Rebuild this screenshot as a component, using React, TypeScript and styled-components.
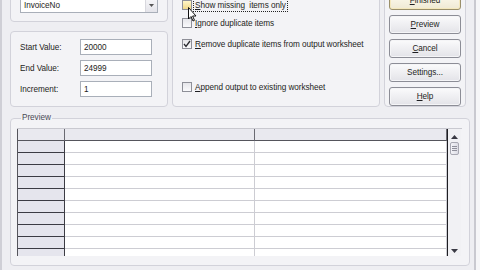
import React from 'react';
import styled, {createGlobalStyle} from 'styled-components';

const GlobalStyle = createGlobalStyle`
  html, body {
    margin: 0;
    padding: 0;
    overflow: hidden;
    background: #ececf0;
  }
  body {
    font-family: "Liberation Sans", Arial, sans-serif;
    font-size: 8.2px;
    letter-spacing: -0.05px;
    color: #1e1e22;
  }
`;

const Window = styled.div`
  width: 480px;
  height: 270px;
  box-sizing: border-box;
  overflow: hidden;
  background: #eeeef2;
  border-left: 2px solid #cfcfd6;
  border-right: 4px solid #f6f6f8;
  padding: 0 6px 0 8px;
  box-shadow: inset -2px 0 0 #c9c9d0;
`;

const TopRow = styled.div`
  display: flex;
  gap: 4px;
  margin-top: -20px;
  height: 127px;
`;

const LeftColumn = styled.div`
  width: 158px;
  display: flex;
  flex-direction: column;
  gap: 9px;
`;

const Group = styled.div<{ $h?: number; $w?: number }>`
  box-sizing: border-box;
  border: 1px solid #d2d2da;
  border-radius: 4px;
  background: #f3f3f6;
  ${p => (p.$h ? `height: ${p.$h}px;` : 'flex: 1;')}
  ${p => (p.$w ? `width: ${p.$w}px; flex: none;` : '')}
`;

const ComboGroup = styled(Group)`
  padding: 16px 0 0 9px;
`;

const Combo = styled.div`
  width: 138px;
  height: 16px;
  box-sizing: border-box;
  border: 1px solid #a9afb9;
  background: #fff;
  display: flex;
  align-items: center;
  padding-left: 3px;
`;

const ComboText = styled.span`
  flex: 1;
`;

const ComboButton = styled.span`
  width: 12px;
  height: 14px;
  box-sizing: border-box;
  border-left: 1px solid #d8d8de;
  background: linear-gradient(#f7f7f9, #e4e4ea);
  display: flex;
  align-items: center;
  justify-content: center;
`;

const RangeGroup = styled(Group)`
  padding: 7px 0 0 9px;
  display: grid;
  grid-template-columns: 60px 72px;
  grid-auto-rows: 16px;
  row-gap: 5px;
  align-items: center;
`;

const FieldLabel = styled.span`
  white-space: nowrap;
`;

const TextBox = styled.div`
  height: 16px;
  box-sizing: border-box;
  border: 1px solid #a9afb9;
  background: #fff;
  padding: 0 3px;
  display: flex;
  align-items: center;
`;

const OptionsGroup = styled(Group)`
  position: relative;
  padding: 18px 0 0 9px;
  display: flex;
  flex-direction: column;
`;

const CheckRow = styled.label<{ $top: number }>`
  display: flex;
  align-items: center;
  gap: 2px;
  height: 12px;
  margin-top: ${p => p.$top}px;
  white-space: nowrap;
`;

const Box = styled.span<{ $hover?: boolean }>`
  width: 10px;
  height: 10px;
  box-sizing: border-box;
  border: 1px solid #8e8f98;
  background: ${p => (p.$hover ? 'linear-gradient(#fff6c8, #f1d98a)' : 'linear-gradient(#e6e6ea, #fafafc)')};
  display: flex;
  align-items: center;
  justify-content: center;
`;

const CheckText = styled.span<{ $focus?: boolean }>`
  padding: 0 1px;
  outline: ${p => (p.$focus ? '1px dotted #222' : 'none')};
  line-height: 11px;
`;

const Mnemonic = styled.span`
  text-decoration: underline;
`;

const Cursor = styled.svg`
  position: absolute;
  left: 15px;
  top: 26px;
`;

const ButtonGroup = styled(Group)`
  padding: 10px 0 0 4px;
  display: flex;
  flex-direction: column;
  gap: 5px;
`;

const Button = styled.div<{ $default?: boolean }>`
  width: 72px;
  height: 19px;
  box-sizing: border-box;
  border: 1px solid ${p => (p.$default ? '#9a8f6a' : '#8c8d96')};
  border-radius: 3px;
  background: ${p => (p.$default ? 'linear-gradient(#fffdf2, #efe9d4)' : 'linear-gradient(#fbfbfc, #e3e3e8)')};
  box-shadow: inset 0 0 0 1px ${p => (p.$default ? '#f4e8bd' : '#f5f5f7')};
  display: flex;
  align-items: ${p => (p.$default ? 'flex-end' : 'center')};
  padding-bottom: ${p => (p.$default ? '4px' : '0')};
  justify-content: center;
`;

const PreviewGroup = styled.fieldset`
  margin: 6px 0 0 0;
  padding: 5px 7px 0 6px;
  height: 153px;
  box-sizing: border-box;
  border: 1px solid #d2d2da;
  border-radius: 4px;
  background: #f3f3f6;
`;

const Legend = styled.legend`
  padding: 0 1px;
  margin-left: 4px;
  color: #4a4a55;
  line-height: 10px;
`;

const GridWrap = styled.div`
  display: flex;
  height: 127px;
  border-top: 1px solid #c9c9d0;
`;

const Table = styled.div`
  width: 429px;
  overflow: hidden;
  border-left: 1px solid #55555c;
`;

const Row = styled.div`
  display: grid;
  grid-template-columns: 47px 190px 1fr;
  height: 12px;
`;

const HeadCell = styled.div`
  box-sizing: border-box;
  background: #e9e9ef;
  border-bottom: 1px solid #55555c;
  border-right: 1px solid #6a6a72;
`;

const RowHead = styled.div`
  box-sizing: border-box;
  background: #e5e5ed;
  border-bottom: 1px solid #3c3c44;
  border-right: 1px solid #3c3c44;
`;

const Cell = styled.div`
  box-sizing: border-box;
  background: #fff;
  border-bottom: 1px solid #cdcdd3;
  border-right: 1px solid #cdcdd3;
`;

const ScrollBar = styled.div`
  width: 14px;
  border-left: 1px solid #1e1e22;
  background: #f1f1f4;
  display: flex;
  flex-direction: column;
  align-items: center;
  padding: 6px 0 3px;
  box-sizing: border-box;
`;

const Thumb = styled.div`
  width: 9px;
  height: 13px;
  margin-top: 3px;
  box-sizing: border-box;
  border: 1px solid #a8a8b2;
  border-radius: 2px;
  background: linear-gradient(90deg, #f4f4f8, #dcdce4);
  display: flex;
  flex-direction: column;
  align-items: center;
  justify-content: center;
  gap: 1px;
`;

const Grip = styled.span`
  width: 5px;
  height: 1px;
  background: #8f8f9a;
`;

const Spacer = styled.div`
  flex: 1;
`;

const Arrow: React.FC<{ down?: boolean }> = ({down}) => (
  <svg width="7" height="4" viewBox="0 0 7 4">
    <path d={down ? 'M0 0H7L3.5 4Z' : 'M0 4H7L3.5 0Z'} fill="#3a3a44"/>
  </svg>
);

const rows = Array.from({length: 10}, (_, i) => i);

const App: React.FC = () => {
  return (
    <Window>
      <GlobalStyle/>
      <TopRow>
        <LeftColumn>
          <ComboGroup $h={42}>
            <Combo>
              <ComboText>InvoiceNo</ComboText>
              <ComboButton>
                <svg width="5" height="3" viewBox="0 0 5 3">
                  <path d="M0 0H5L2.5 3Z" fill="#555"/>
                </svg>
              </ComboButton>
            </Combo>
          </ComboGroup>
          <RangeGroup>
            <FieldLabel>Start Value:</FieldLabel>
            <TextBox>20000</TextBox>
            <FieldLabel>End Value:</FieldLabel>
            <TextBox>24999</TextBox>
            <FieldLabel>Increment:</FieldLabel>
            <TextBox>1</TextBox>
          </RangeGroup>
        </LeftColumn>
        <OptionsGroup $w={208}>
          <CheckRow $top={0}>
            <Box $hover/>
            <CheckText $focus><Mnemonic>S</Mnemonic>how missing&nbsp; items only</CheckText>
          </CheckRow>
          <CheckRow $top={6}>
            <Box/>
            <CheckText><Mnemonic>I</Mnemonic>gnore duplicate items</CheckText>
          </CheckRow>
          <CheckRow $top={9}>
            <Box>
              <svg width="8" height="8" viewBox="0 0 8 8">
                <path d="M1 4L3 6.5L7 1" stroke="#2a2a30" strokeWidth="1.3" fill="none"/>
              </svg>
            </Box>
            <CheckText><Mnemonic>R</Mnemonic>emove duplicate items from output worksheet</CheckText>
          </CheckRow>
          <CheckRow $top={31}>
            <Box/>
            <CheckText><Mnemonic>A</Mnemonic>ppend output to existing worksheet</CheckText>
          </CheckRow>
          <Cursor width="9" height="15" viewBox="0 0 9 15">
            <path d="M0.5 0.5V12L3 9.5L5 14L6.5 13.3L4.6 9H8Z" fill="#fff" stroke="#111" strokeWidth="1"/>
          </Cursor>
        </OptionsGroup>
        <ButtonGroup $w={82}>
          <Button $default><span><Mnemonic>F</Mnemonic>inished</span></Button>
          <Button><span><Mnemonic>P</Mnemonic>review</span></Button>
          <Button><span><Mnemonic>C</Mnemonic>ancel</span></Button>
          <Button><span>Settings...</span></Button>
          <Button><span><Mnemonic>H</Mnemonic>elp</span></Button>
        </ButtonGroup>
      </TopRow>
      <PreviewGroup>
        <Legend>Preview</Legend>
        <GridWrap>
          <Table>
            <Row>
              <HeadCell/>
              <HeadCell/>
              <HeadCell/>
            </Row>
            {rows.map(i => (
              <Row key={i}>
                <RowHead/>
                <Cell/>
                <Cell/>
              </Row>
            ))}
          </Table>
          <ScrollBar>
            <Arrow/>
            <Thumb>
              <Grip/>
              <Grip/>
              <Grip/>
            </Thumb>
            <Spacer/>
            <Arrow down/>
          </ScrollBar>
        </GridWrap>
      </PreviewGroup>
    </Window>
  );
};

export default App;
